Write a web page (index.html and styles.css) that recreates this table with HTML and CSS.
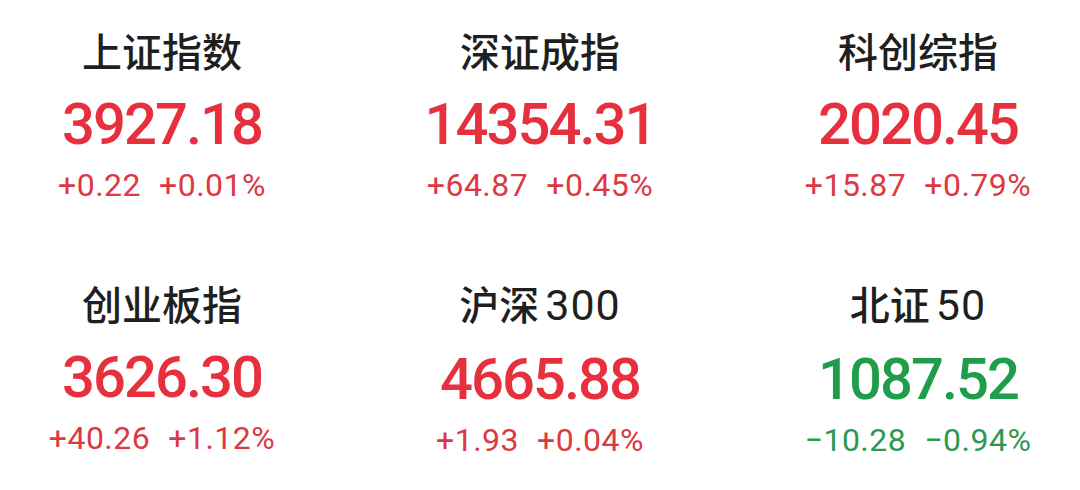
FILE: index.html
```html
<!DOCTYPE html>
<html lang="zh-CN">
<head>
<meta charset="UTF-8">
<meta name="viewport" content="width=device-width, initial-scale=1.0">
<title>行情指数</title>
<link rel="stylesheet" href="styles.css">
</head>
<body>
<div class="board">
    <div class="card">
        <div class="name">上证指数</div>
        <div class="price up">3927.18</div>
        <div class="change up"><span>+0.22</span><span>+0.01%</span></div>
    </div>
    <div class="card">
        <div class="name">深证成指</div>
        <div class="price up">14354.31</div>
        <div class="change up"><span>+64.87</span><span>+0.45%</span></div>
    </div>
    <div class="card">
        <div class="name">科创综指</div>
        <div class="price up">2020.45</div>
        <div class="change up"><span>+15.87</span><span>+0.79%</span></div>
    </div>
    <div class="card">
        <div class="name">创业板指</div>
        <div class="price up">3626.30</div>
        <div class="change up"><span>+40.26</span><span>+1.12%</span></div>
    </div>
    <div class="card">
        <div class="name">沪深<span class="num">300</span></div>
        <div class="price up">4665.88</div>
        <div class="change up"><span>+1.93</span><span>+0.04%</span></div>
    </div>
    <div class="card">
        <div class="name">北证<span class="num">50</span></div>
        <div class="price down">1087.52</div>
        <div class="change down"><span>−10.28</span><span>−0.94%</span></div>
    </div>
</div>
</body>
</html>
```
FILE: styles.css
```css
body {
    margin: 0;
    background-color: #ffffff;
    font-family: Roboto, "Noto Sans CJK SC", sans-serif;
}

.board {
    display: grid;
    grid-template-columns: repeat(3, 324px);
    column-gap: 54px;
    row-gap: 74px;
    padding-top: 26px;
}

.card {
    text-align: center;
}

.name {
    font-family: "Noto Sans CJK SC", sans-serif;
    font-size: 40px;
    font-weight: 500;
    line-height: 48px;
    color: #1f1f1f;
}
.name .num {
    margin-left: 6px;
    font-family: Roboto, sans-serif;
    font-weight: 400;
    font-size: 43px;
    letter-spacing: 1px;
}

.price {
    margin-top: 20px;
    font-size: 58px;
    font-weight: 500;
    line-height: 60px;
    letter-spacing: -2px;
}

.change {
    margin-top: 11px;
    font-size: 32px;
    line-height: 40px;
    letter-spacing: 0.5px;
}
.change span + span {
    margin-left: 18px;
}

.price.up { color: #e6303e; }
.change.up { color: #dc3943; }
.price.down { color: #1f9d4b; }
.change.down { color: #2b9a50; }
```
